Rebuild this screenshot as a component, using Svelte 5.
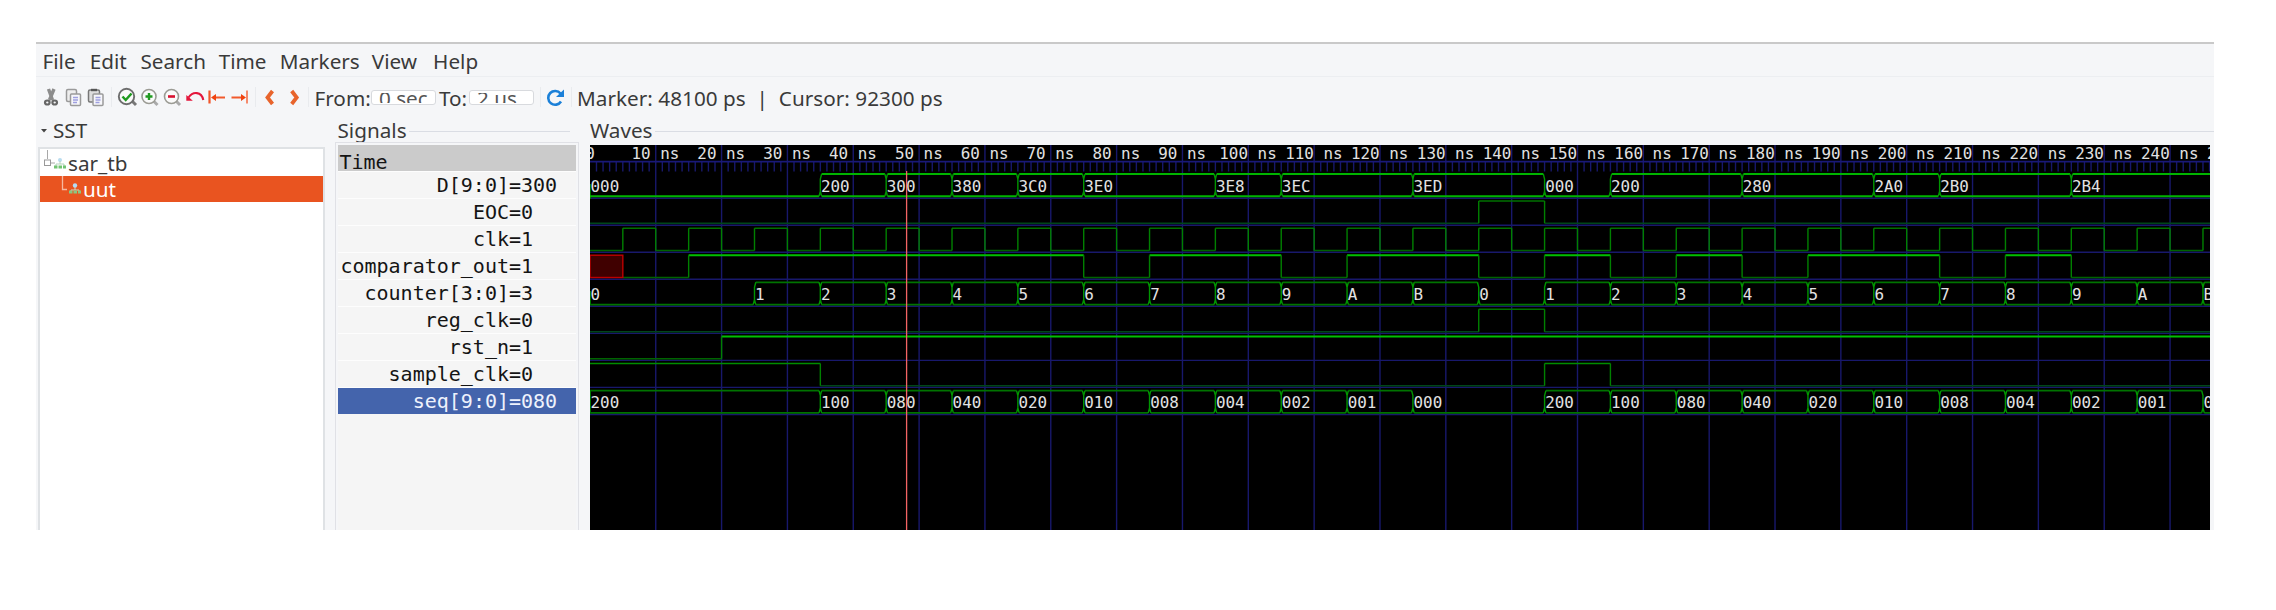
<script>
  const NS = 6.584;
  const x = (t) => t * NS - 0.1;
  const W = 1620, H = 385;
  const END = 247;
  const pitch = 27.07;
  const top = (r) => 29 + r * pitch;
  const menus = [['File', 47.2], ['Edit', 50.8], ['Search', 78.2], ['Time', 61], ['Markers', 92.2], ['View', 61.2], ['Help', 60]];

  const signals = [
    ['D[9:0]', '300'], ['EOC', '0'], ['clk', '1'], ['comparator_out', '1'], ['counter[3:0]', '3'],
    ['reg_clk', '0'], ['rst_n', '1'], ['sample_clk', '0'], ['seq[9:0]', '080']
  ];

  const counter = [[0, '0']];
  for (let i = 1; i <= 11; i++) counter.push([15 + i * 10, i.toString(16).toUpperCase()]);
  counter.push([135, '0']);
  for (let i = 1; i <= 11; i++) counter.push([135 + i * 10, i.toString(16).toUpperCase()]);

  const shifts = ['100', '080', '040', '020', '010', '008', '004', '002', '001', '000'];
  const seq = [[0, '200'], ...shifts.map((v, i) => [35 + i * 10, v]), [145, '200'], ...shifts.map((v, i) => [155 + i * 10, v])];

  const buses = [
    { row: 0, color: '#00b400', width: 2, data: [[0, '000'], [35, '200'], [45, '300'], [55, '380'], [65, '3C0'], [75, '3E0'], [95, '3E8'], [105, '3EC'], [125, '3ED'], [145, '000'], [155, '200'], [175, '280'], [195, '2A0'], [205, '2B0'], [225, '2B4']] },
    { row: 4, color: '#007300', width: 1.8, data: counter },
    { row: 8, color: '#007300', width: 1.8, data: seq }
  ];

  const clkEdges = [];
  for (let t = 5; t < 250; t += 5) clkEdges.push(t);

  const bits = [
    { row: 1, start: 0, from: 0, edges: [135, 145] },
    { row: 2, start: 0, from: 0, edges: clkEdges },
    { row: 3, start: 0, from: 5, edges: [15, 75, 85, 105, 115, 135, 145, 155, 165, 175, 185, 205, 215, 225] },
    { row: 5, start: 0, from: 0, edges: [135, 145] },
    { row: 6, start: 0, from: 0, edges: [20] },
    { row: 7, start: 1, from: 0, edges: [35, 145, 155] }
  ];

  // Splits a one-bit trace into its level runs and its edges.
  function trace(b) {
    const hi = top(b.row), lo = hi + 22.3;
    let level = b.start, t = b.from, highs = '', lows = '', verts = '';
    for (const e of [...b.edges, END]) {
      const seg = `M${x(t)} ${level ? hi : lo}H${x(e)}`;
      if (level) highs += seg; else lows += seg;
      if (e !== END) verts += `M${x(e)} ${hi}V${lo}`;
      t = e; level = 1 - level;
    }
    return { highs, lows, verts, row: b.row };
  }

  // Rails run along the top and bottom of a bus; an all-zero value has no top rail.
  function busPath(b) {
    const hi = top(b.row), lo = hi + 22.3;
    let rails = '', marks = '';
    b.data.forEach(([t, v], i) => {
      const next = i + 1 < b.data.length ? b.data[i + 1][0] : END;
      const a = x(t) + (i ? 1.3 : 0), z = x(next) - 1.3;
      rails += `M${a} ${lo}H${z}`;
      if (Number(v) !== 0) rails += `M${a} ${hi}H${z}`;
      if (i) {
        const prevZero = Number(b.data[i - 1][1]) === 0, zero = Number(v) === 0;
        const m = x(t);
        if (!prevZero) marks += `M${m - 1.3} ${hi}L${m} ${hi + 5}V${lo - 5}`;
        if (!zero) marks += `M${m + 1.3} ${hi}L${m} ${hi + 5}V${lo - 5}`;
        marks += `M${m} ${hi + 11}V${lo - 5}M${m - 1.3} ${lo}L${m} ${lo - 5}L${m + 1.3} ${lo}`;
      }
    });
    return { rails, marks };
  }

  const traces = bits.map(trace);
  const majors = Array.from({ length: 24 }, (_, i) => (i + 1) * 10);
  const ticks = Array.from({ length: 246 }, (_, i) => i + 1).filter((t) => t % 10);
</script>

<div class="window">
  <nav>
    {#each menus as [name, w]}<span style="width:{w}px">{name}</span>{/each}
  </nav>

  <div class="toolbar">
    <svg class="icons" width="276" height="34" viewBox="38 82 276 34" fill="none">
      <g stroke="#777" stroke-width="2.2">
        <path d="M48.500 90L52.500 101M54 90L49.500 101" stroke="#8c8c8c" stroke-width="3.400" />
        <ellipse cx="47.300" cy="103.500" rx="2.300" ry="2" stroke="#666" /><ellipse cx="54.700" cy="103.500" rx="2.300" ry="2" stroke="#666" />
      </g>
      <g stroke="#9a9a9a" stroke-width="1.500">
        <rect x="66.500" y="90.500" width="10" height="12" rx="1.500" fill="#eee" />
        <rect x="70.500" y="95" width="10" height="11.500" rx="1" fill="#f6f6fa" />
        <path d="M73 98.500h5M73 101h5M73 103.500h4" stroke="#9fa0e0" />
        <rect x="88.500" y="91" width="11" height="12" rx="1.500" fill="#ddd" stroke="#777" /><path d="M91 91h6" stroke="#555" stroke-width="2.400" />
        <rect x="93" y="95" width="10" height="11.500" rx="1" fill="#f6f6fa" />
        <path d="M95.500 98.500h5M95.500 101h5M95.500 103.500h4" stroke="#9fa0e0" />
      </g>
      <path d="M111.500 88v20M255.500 88v20M308.500 88v20" stroke="#e9ebee" />
      <path d="M132 102l4 4" stroke="#777" stroke-width="3" /><circle cx="126.500" cy="97.500" r="7.700" fill="#fafafa" stroke="#6d6d6d" stroke-width="1.900" />
      <path d="M122.500 97.500l3.200 3.500 5.800-6.500" stroke="#1f9a1f" stroke-width="2.500" />
      <path d="M153.500 102l4 4" stroke="#aaa" stroke-width="3" /><circle cx="149" cy="97.500" r="7" fill="#fafafa" stroke="#9b9b94" stroke-width="1.600" />
      <path d="M145.500 97.500h7M149 94v7" stroke="#219a21" stroke-width="2.400" />
      <path d="M176 102l4 4" stroke="#aaa" stroke-width="3" /><circle cx="171.500" cy="97.500" r="7" fill="#fafafa" stroke="#9b9b94" stroke-width="1.600" />
      <path d="M168 97.500h7" stroke="#d8112f" stroke-width="2.600" />
      <path d="M188.500 98.500C193 92 201.500 92.500 203.300 101" stroke="#e4163c" stroke-width="2.100" /><path d="M186.300 96v5.800h6.500z" fill="#e4163c" />
      <path d="M209.500 91.500v13" stroke="#f0562a" stroke-width="2.200" /><path d="M214 98.500h11M231.500 98.500h11" stroke="#f25a2c" stroke-width="2" /><path d="M247 91.500v13" stroke="#f58a6c" stroke-width="2" />
      <path d="M211 98.500l5-3.500v7zM246 98.500l-5-3.500v7z" fill="#f0430f" />
      <path d="M272.500 92l-5 6.500 5 6.500M291.700 92l5 6.500-5 6.500" stroke="#e8642c" stroke-width="3.800" />
    </svg>
    <span class="from">From:</span><span class="entry"><i>0 sec</i></span>
    <span class="to">To:</span><span class="entry"><i>2 us</i></span>
    <svg class="reload" width="43" height="34" viewBox="535 82 43 34" fill="none">
      <path d="M541.500 88v20M572.500 88v20" stroke="#e9ebee" />
      <path d="M561.500 94.500A6.900 6.900 0 1 0 562 102.500" stroke="#1b80d8" stroke-width="2.600" /><path d="M565 90.500v7.500h-8z" fill="#1b80d8" />
    </svg>
    <span class="status">Marker: 48100 ps&nbsp; |&nbsp; Cursor: 92300 ps</span>
  </div>

  <main>
    <section class="sst">
      <h2><svg width="8" height="6"><path d="M1 1h6l-3 3.500z" fill="#444" /></svg>SST</h2>
      <div class="tree">
        <div class="node">
          <svg width="26" height="27" fill="none"><path d="M7.500 1v9M11 14h4" stroke="#a8a8a8" /><rect x="4.500" y="11" width="6" height="5.500" stroke="#999" /><circle cx="20" cy="11" r="2" fill="#b9dcef" /><path d="M20 12v3M16 17v-2h8v2" stroke="#b5d3be" /><path d="M14 18h3.500M18.500 18h3.500M23 18h3" stroke="#72c472" stroke-width="3" /></svg><span>sar_tb</span>
        </div>
        <div class="node selected">
          <svg width="41" height="26" fill="none"><path d="M22.500 0v13.500h4.500" stroke="#f6b9a1" stroke-width="1.300" /><circle cx="35" cy="9.500" r="2.200" fill="#b4dcf5" /><path d="M35 11v3M31 16v-2h8v2" stroke="#d5d5c0" /><path d="M29 16h3.500M33.500 16h3.500M38 16h3" stroke="#8cc680" stroke-width="3" /></svg><span>uut</span>
        </div>
      </div>
    </section>

    <section class="signals">
      <h2><span>Signals</span></h2>
      <div class="list">
        <div class="time">Time</div>
        {#each signals as [name, value], i}
          <div class="sig" class:active={i === 8}><span>{name}</span><b>={value}</b></div>
        {/each}
      </div>
    </section>

    <section class="waves">
      <h2><span>Waves</span></h2>
      <svg class="plot" width={W} height={H} viewBox="0 0 {W} {H}" fill="none">
        <rect width={W} height={H} fill="#000" />
        <g stroke="#18186c" stroke-width="1.400">
          {#each majors as t}<path d="M{x(t)} 0V{H}" />{/each}
          {#each ticks as t}<path d="M{x(t)} 17V26.500" />{/each}
          <path d="M0 16.600H{W}" stroke="#191978" stroke-width="1.600" />
          {#each signals as s, i}<path d="M0 {53.200 + i * 27.030}H{W}" />{/each}
        </g>
        <g class="label">
          <text x="0" y="13.500" text-anchor="middle">0</text>
          {#each majors as t}<text x={x(t) - 0.300} y="13.500" text-anchor="middle">{t} ns</text>{/each}
          <text x={x(250) - 0.300} y="13.500" text-anchor="middle">250 ns</text>
        </g>
        {#each traces as tr}
          <path d={tr.lows} stroke={tr.row === 1 || tr.row === 5 || tr.row === 7 ? '#00461a' : '#006400'} stroke-width="1.500" />
          <path d={tr.highs} stroke={tr.row === 3 || tr.row === 6 ? '#00c000' : tr.row === 7 ? '#008c00' : '#007000'} stroke-width={tr.row === 3 || tr.row === 6 ? 2 : 1.500} />
          <path d={tr.verts} stroke="#008000" stroke-width="1.400" />
        {/each}
        <rect x="0" y={top(3)} width={x(5)} height="22.300" fill="#400000" stroke="#be0000" stroke-width="1.400" />
        <path d="M0.500 39V54M0.500 146V160M0.500 246V268" stroke="#007800" />
        {#each buses as b}
          {@const p = busPath(b)}
          <path d={p.rails} stroke={b.color} stroke-width={b.width} />
          <path d={p.marks} stroke="#009600" stroke-width="1.400" />
          <g class="label">{#each b.data as [t, v]}<text x={x(t) + 0.600} y={top(b.row) + 17.600}>{v}</text>{/each}</g>
        {/each}
        <path d="M316.600 26V{H}" stroke="#f46464" stroke-width="1.300" />
      </svg>
    </section>
  </main>
</div>

<style>
  :global(body) { margin: 0; background: #fff; }
  .window { box-sizing: border-box; width: 2178px; height: 488px; margin: 42px 0 0 36px; padding-top: 1px; overflow: hidden; background: #f5f6f8; border-top: 2px solid #c9c9c9; color: #3a3a3a; font-family: "Noto Sans", sans-serif; font-size: 20.7px; line-height: 28px; white-space: nowrap; }
  nav { display: flex; height: 32px; box-sizing: border-box; padding: 2px 0 0 6.500px; border-bottom: 1px solid #eceef1; }
  .toolbar { display: flex; height: 42px; box-sizing: border-box; padding-top: 4px; }
  .toolbar svg { display: block; flex: none; }
  .icons { margin-left: 2px; }
  .toolbar > span { line-height: 34px; }
  .from { width: 57px; text-indent: 0.500px; }
  .to { width: 30px; margin-left: 3px; }
  .toolbar .entry { box-sizing: border-box; width: 65px; height: 15px; margin-top: 9px; background: #fff; border: 1px solid #d8dade; border-radius: 3px; overflow: hidden; padding: 2px 0 2px 7px; line-height: 10px; }
  .entry i { display: block; height: 10px; overflow: hidden; font-style: normal; line-height: 11px; color: #555; }
  .status { letter-spacing: 0.030px; }
  main { display: flex; height: 411px; }
  section { display: flex; flex-direction: column; }
  h2 { margin: 0; height: 26px; font-size: 20.7px; font-weight: 400; line-height: 23px; }
  .sst { width: 288px; }
  .sst h2 { padding-left: 4px; }
  .sst h2 svg { vertical-align: 4px; margin-right: 5px; }
  .tree { box-sizing: border-box; width: 287px; height: 383px; margin: 2px 0 0 2px; border: 2px solid #dfe2e5; border-bottom: 0; background: #fff; }
  .node { display: flex; height: 27px; line-height: 28px; }
  .node.selected { height: 26px; color: #fff; background: #e95420; line-height: 26px; }
  .node span { padding-left: 2px; }
  .signals { box-sizing: border-box; width: 246px; padding-left: 13.500px; }
  .signals h2, .waves h2 { display: flex; }
  .signals h2::after, .waves h2::after { content: ""; height: 1px; flex: 1; background: #dadde4; margin: 12px 0 0 2px; }
  .list { width: 238px; height: 386px; outline: 1px solid #e0e1e6; outline-offset: 2px; background: #f5f5f5; font-family: "DejaVu Sans Mono", monospace; font-size: 20px; color: #141414; }
  .time { height: 26px; background: #cbcbcb; padding-left: 2px; line-height: 34px; }
  .sig { display: flex; height: 26px; line-height: 27px; border-top: 1px solid #fdfdfd; }
  .sig span { width: 171.500px; text-align: right; }
  .sig b { font-weight: 400; }
  .sig.active { background: #4464ac; color: #eef2fc; }
  .waves { flex: 1; padding-left: 20px; }
  .plot { display: block; flex: none; }
  .label { font-family: "DejaVu Sans Mono", monospace; font-size: 15.9px; fill: #e2e2e2; white-space: pre; }
</style>
